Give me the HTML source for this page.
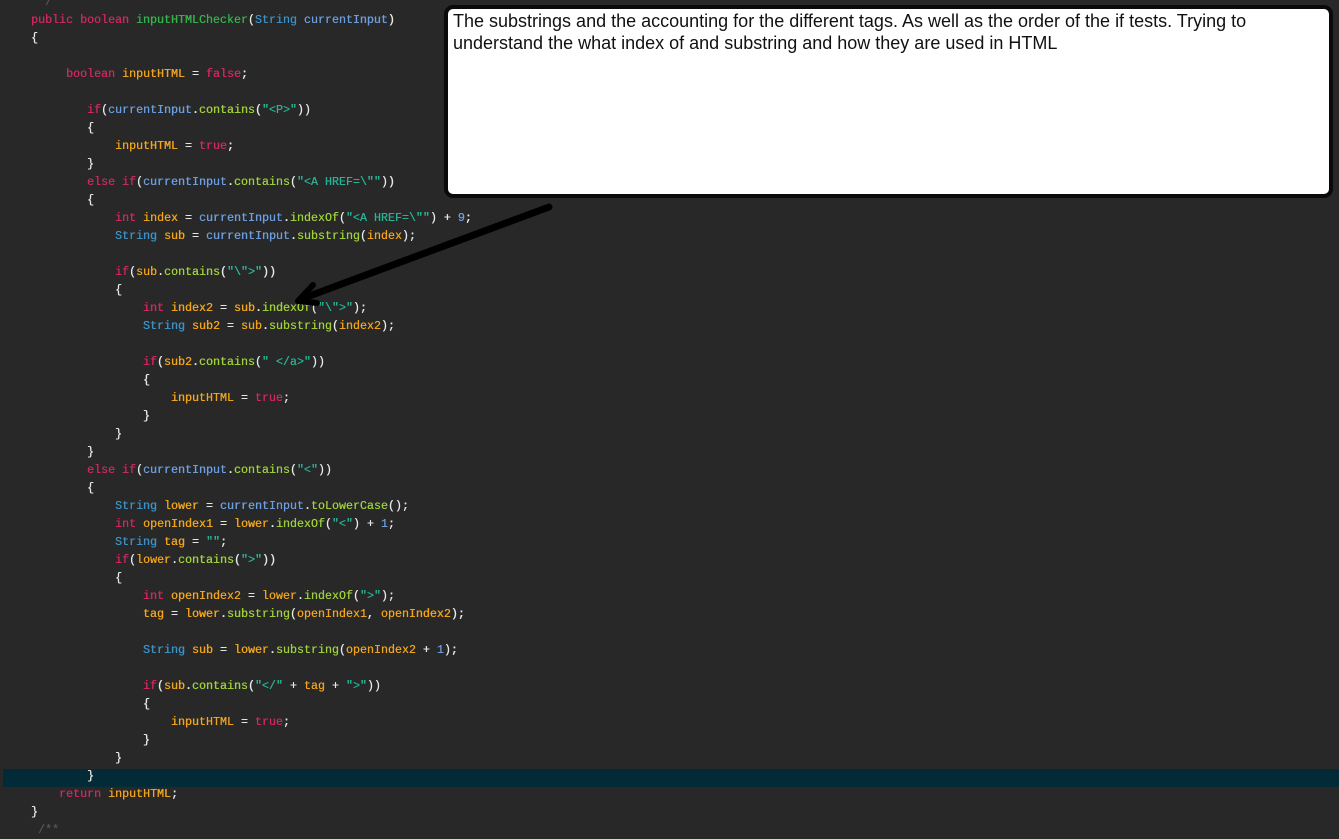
<!DOCTYPE html>
<html><head><meta charset="utf-8"><style>
html,body{margin:0;padding:0;}
body{width:1339px;height:828px;background:#282828;position:relative;overflow:hidden;}
.hl{position:absolute;left:3px;top:769px;width:1336px;height:18px;background:#022b37;}
.code{position:absolute;left:31px;top:11px;font-family:"Liberation Mono",monospace;font-size:11.67px;line-height:18px;color:#e8e8e8;white-space:pre;text-shadow:0.3px 0 0 currentColor;}
.k{color:#d0295f}.m{color:#34b34a}.t{color:#3a93c8}.p{color:#6c9ee0}.v{color:#f2a51c}.c{color:#9fd13a}.s{color:#27b596}.n{color:#6f9fe0}.g{color:#555}
.box{position:absolute;left:444px;top:5px;width:881px;height:185px;background:#fff;border:4px solid #0a0a0a;border-radius:9px;}
.box div{position:absolute;left:5px;top:1px;font-family:"Liberation Sans",sans-serif;font-size:18px;line-height:22px;color:#111;}
svg{position:absolute;left:0;top:0;}
</style></head><body>
<div class="hl"></div>
<div class="code"><span class="g" style="position:absolute;top:-18px"> */</span><span class="k">public boolean</span> <span class="m">inputHTMLChecker</span>(<span class="t">String</span> <span class="p">currentInput</span>)
{

     <span class="k">boolean</span> <span class="v">inputHTML</span> = <span class="k">false</span>;

        <span class="k">if</span>(<span class="p">currentInput</span>.<span class="c">contains</span>(<span class="s">"&lt;P&gt;"</span>))
        {
            <span class="v">inputHTML</span> = <span class="k">true</span>;
        }
        <span class="k">else if</span>(<span class="p">currentInput</span>.<span class="c">contains</span>(<span class="s">"&lt;A HREF=\""</span>))
        {
            <span class="k">int</span> <span class="v">index</span> = <span class="p">currentInput</span>.<span class="c">indexOf</span>(<span class="s">"&lt;A HREF=\""</span>) + <span class="n">9</span>;
            <span class="t">String</span> <span class="v">sub</span> = <span class="p">currentInput</span>.<span class="c">substring</span>(<span class="v">index</span>);

            <span class="k">if</span>(<span class="v">sub</span>.<span class="c">contains</span>(<span class="s">"\"&gt;"</span>))
            {
                <span class="k">int</span> <span class="v">index2</span> = <span class="v">sub</span>.<span class="c">indexOf</span>(<span class="s">"\"&gt;"</span>);
                <span class="t">String</span> <span class="v">sub2</span> = <span class="v">sub</span>.<span class="c">substring</span>(<span class="v">index2</span>);

                <span class="k">if</span>(<span class="v">sub2</span>.<span class="c">contains</span>(<span class="s">" &lt;/a&gt;"</span>))
                {
                    <span class="v">inputHTML</span> = <span class="k">true</span>;
                }
            }
        }
        <span class="k">else if</span>(<span class="p">currentInput</span>.<span class="c">contains</span>(<span class="s">"&lt;"</span>))
        {
            <span class="t">String</span> <span class="v">lower</span> = <span class="p">currentInput</span>.<span class="c">toLowerCase</span>();
            <span class="k">int</span> <span class="v">openIndex1</span> = <span class="v">lower</span>.<span class="c">indexOf</span>(<span class="s">"&lt;"</span>) + <span class="n">1</span>;
            <span class="t">String</span> <span class="v">tag</span> = <span class="s">""</span>;
            <span class="k">if</span>(<span class="v">lower</span>.<span class="c">contains</span>(<span class="s">"&gt;"</span>))
            {
                <span class="k">int</span> <span class="v">openIndex2</span> = <span class="v">lower</span>.<span class="c">indexOf</span>(<span class="s">"&gt;"</span>);
                <span class="v">tag</span> = <span class="v">lower</span>.<span class="c">substring</span>(<span class="v">openIndex1</span>, <span class="v">openIndex2</span>);

                <span class="t">String</span> <span class="v">sub</span> = <span class="v">lower</span>.<span class="c">substring</span>(<span class="v">openIndex2</span> + <span class="n">1</span>);

                <span class="k">if</span>(<span class="v">sub</span>.<span class="c">contains</span>(<span class="s">"&lt;/"</span> + <span class="v">tag</span> + <span class="s">"&gt;"</span>))
                {
                    <span class="v">inputHTML</span> = <span class="k">true</span>;
                }
            }
        }
    <span class="k">return</span> <span class="v">inputHTML</span>;
}
 <span class="g">/**</span></div>
<div class="box"><div>The substrings and the accounting for the different tags. As well as the order of the if tests. Trying to<br>understand the what index of and substring and how they are used in HTML</div></div>
<svg width="1339" height="828"><line x1="549" y1="207" x2="304" y2="298" stroke="#000" stroke-width="7" stroke-linecap="round"/><polyline points="313,285 298,301 317,303" fill="none" stroke="#000" stroke-width="6" stroke-linecap="round" stroke-linejoin="round"/></svg>
</body></html>
